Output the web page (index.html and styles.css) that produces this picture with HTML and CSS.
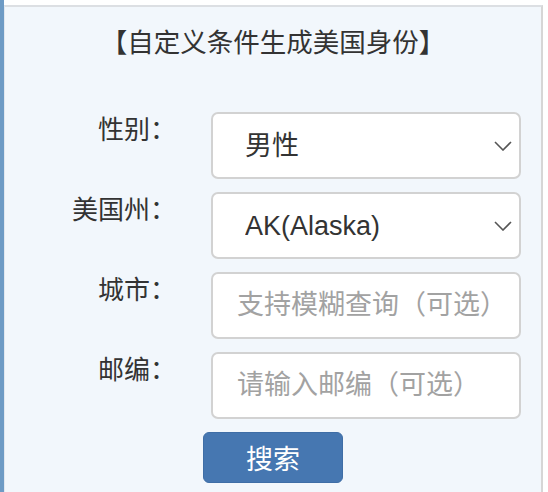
FILE: index.html
```html
<!DOCTYPE html>
<html lang="zh-CN">
<head>
<meta charset="utf-8">
<title>自定义条件生成美国身份</title>
<link rel="stylesheet" href="styles.css">
</head>
<body>
<div class="page">
  <div class="sidebar"></div>
  <div class="panel">
    <h2 class="title">【自定义条件生成美国身份】</h2>
    <form class="form">
      <div class="row">
        <label class="label">性别：</label>
        <div class="field select-wrap">
          <select class="control select">
            <option>男性</option>
            <option>女性</option>
          </select>
          <svg class="chev" width="18" height="10" viewBox="0 0 18 10"><path d="M1 1 L9 9 L17 1" fill="none" stroke="#555" stroke-width="1.6"/></svg>
        </div>
      </div>
      <div class="row">
        <label class="label">美国州：</label>
        <div class="field select-wrap">
          <select class="control select">
            <option>AK(Alaska)</option>
          </select>
          <svg class="chev" width="18" height="10" viewBox="0 0 18 10"><path d="M1 1 L9 9 L17 1" fill="none" stroke="#555" stroke-width="1.6"/></svg>
        </div>
      </div>
      <div class="row">
        <label class="label">城市：</label>
        <div class="field">
          <input class="control input" type="text" placeholder="支持模糊查询（可选）">
        </div>
      </div>
      <div class="row">
        <label class="label">邮编：</label>
        <div class="field">
          <input class="control input" type="text" placeholder="请输入邮编（可选）">
        </div>
      </div>
      <div class="actions">
        <button type="button" class="btn">搜索</button>
      </div>
    </form>
  </div>
</div>
</body>
</html>
```
FILE: styles.css
```css
html, body {
  margin: 0;
  padding: 0;
  background: #ffffff;
  height: 100%;
  overflow: hidden;
}
body {
  font-family: "Liberation Sans", "Noto Sans CJK SC", sans-serif;
  color: #333333;
}
.page {
  display: flex;
  height: 100vh;
}
.sidebar {
  flex: 0 0 4px;
  background: #6e9bc5;
}
.panel {
  flex: 0 0 539px;
  box-sizing: border-box;
  margin-top: 5px;
  background: #f2f7fc;
  border-top: 2px solid #dcdfe3;
  border-right: 2px solid #d6d6d6;
  border-left: 1px solid #e2e8ef;
}
.title {
  margin: 0;
  padding-top: 18px;
  font-size: 26.5px;
  line-height: 36px;
  font-weight: normal;
  text-align: center;
  color: #333333;
}
.form {
  margin-top: 51px;
  display: flex;
  flex-direction: column;
  gap: 13px;
}
.row {
  display: flex;
  align-items: flex-start;
  gap: 35px;
}
.label {
  flex: 0 0 171px;
  text-align: right;
  font-size: 26px;
  line-height: 36px;
  color: #333333;
}
.field {
  flex: 0 0 310px;
  position: relative;
}
.control {
  display: block;
  width: 100%;
  height: 67px;
  box-sizing: border-box;
  border: 2px solid #d2d2d2;
  border-radius: 7px;
  background: #ffffff;
  font-family: "Liberation Sans", "Noto Sans CJK SC", sans-serif;
  font-size: 27px;
  color: #333333;
  outline: none;
  margin: 0;
}
.select {
  appearance: none;
  -webkit-appearance: none;
  padding: 0 40px 0 32px;
}
.input {
  padding: 0 24px;
}
.input::placeholder {
  color: #a2a2a2;
}
.chev {
  position: absolute;
  right: 9px;
  top: 29px;
  pointer-events: none;
}
.actions {
  display: flex;
  justify-content: center;
}
.btn {
  width: 140px;
  height: 51px;
  box-sizing: border-box;
  background: #4677b1;
  border: 1px solid #3f6ea6;
  border-radius: 6px;
  color: #ffffff;
  font-family: "Liberation Sans", "Noto Sans CJK SC", sans-serif;
  font-size: 27px;
  padding: 0;
}
```
